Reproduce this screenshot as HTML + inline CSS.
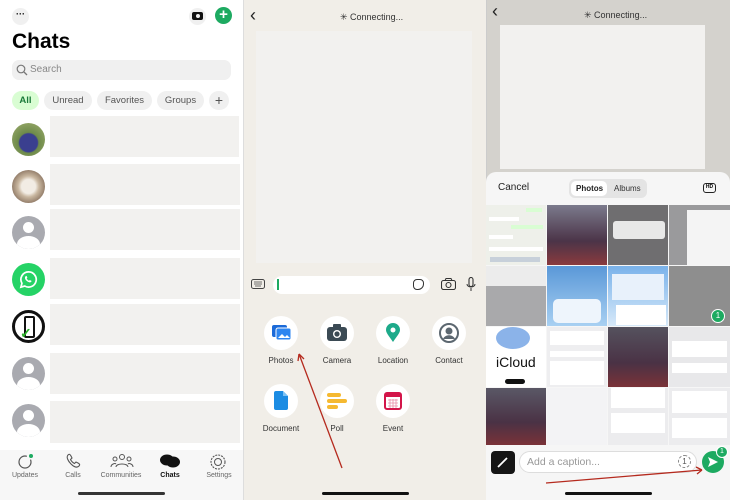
<!DOCTYPE html>
<html><head><meta charset="utf-8"><style>
*{margin:0;padding:0;box-sizing:border-box}
body{width:730px;height:500px;overflow:hidden;position:relative;font-family:"Liberation Sans",sans-serif;background:#fff}
.a{position:absolute}
.t{position:absolute;white-space:nowrap}
.box{position:absolute;background:#f2f1ef}
.av{position:absolute;left:12px;width:33px;height:33px;border-radius:50%;background:#a9aab0;overflow:hidden}
.chip{position:absolute;top:91px;height:19px;border-radius:10px;background:#f0f0f0;font-size:9.5px;color:#555;text-align:center;line-height:19px}
.tab{position:absolute;top:472px;font-size:7px;color:#666;text-align:center;width:50px}
.ic{position:absolute;width:34px;height:34px;border-radius:50%;background:#fff}
.lb{position:absolute;font-size:8px;color:#333;text-align:center;width:60px}
.th{position:absolute;overflow:hidden}
</style></head><body>
<!-- Panel 1 -->
<div class="a" style="left:0;top:0;width:244px;height:500px;background:#fff;border-right:1px solid #ddd"></div>
<div class="a" style="left:12px;top:8px;width:17px;height:17px;border-radius:50%;background:#f0f0f0;font-size:9px;text-align:center;line-height:13px;font-weight:bold">···</div>
<div class="a" style="left:189px;top:8px;width:17px;height:17px;border-radius:50%;background:#f0f0f0"></div>
<div class="a" style="left:192px;top:12px;width:11px;height:8px;border-radius:2px;background:#111"></div>
<div class="a" style="left:195.5px;top:14px;width:4px;height:4px;border-radius:50%;background:#f0f0f0"></div>
<div class="a" style="left:215px;top:7px;width:17px;height:17px;border-radius:50%;background:#1daa61;color:#fff;font-size:15px;text-align:center;line-height:16px;font-weight:bold">+</div>
<div class="t" style="left:12px;top:30px;font-size:21px;font-weight:bold;color:#000">Chats</div>
<div class="a" style="left:12px;top:60px;width:219px;height:20px;border-radius:7px;background:#f0f0f0"></div>
<svg class="a" style="left:16px;top:64px" width="12" height="12"><circle cx="5" cy="5" r="3.8" fill="none" stroke="#777" stroke-width="1.2"/><path d="M8 8L11 11" stroke="#777" stroke-width="1.3"/></svg>
<div class="t" style="left:30px;top:64px;font-size:10px;color:#888">Search</div>
<div class="chip" style="left:12px;width:27px;background:#d9fdd3;color:#1b7a3a;font-weight:bold">All</div>
<div class="chip" style="left:44px;width:48px">Unread</div>
<div class="chip" style="left:97px;width:55px">Favorites</div>
<div class="chip" style="left:157px;width:47px">Groups</div>
<div class="chip" style="left:209px;width:20px;font-size:14px;line-height:18px">+</div>
<div class="box" style="left:50px;top:116px;width:189px;height:41px"></div>
<div class="box" style="left:50px;top:164px;width:190px;height:41px"></div>
<div class="box" style="left:50px;top:209px;width:190px;height:41px"></div>
<div class="box" style="left:50px;top:258px;width:190px;height:41px"></div>
<div class="box" style="left:50px;top:304px;width:190px;height:41px"></div>
<div class="box" style="left:50px;top:353px;width:190px;height:41px"></div>
<div class="box" style="left:50px;top:401px;width:190px;height:42px"></div>
<div class="av" style="top:123px;background:radial-gradient(circle at 50% 60%,#3a3f8f 0 35%,#6d8a4a 40%,#a3b070)"></div>
<div class="av" style="top:170px;background:radial-gradient(circle at 50% 50%,#f2ece4 0 30%,#c9b7a0 45%,#5a4030)"></div>
<div class="av" style="top:216px"><div class="a" style="left:11px;top:6px;width:11px;height:11px;border-radius:50%;background:#fff"></div><div class="a" style="left:5px;top:20px;width:23px;height:16px;border-radius:50% 50% 0 0;background:#fff"></div></div>
<div class="av" style="top:263px;background:#25d366"><svg class="a" style="left:7px;top:7px" width="19" height="19" viewBox="0 0 20 20"><path d="M10 2a8 8 0 0 0-6.9 12L2 18l4.1-1.1A8 8 0 1 0 10 2z" fill="none" stroke="#fff" stroke-width="1.8"/><path d="M7 6.5c.5-.5 1-.3 1.3.4l.5 1.2-.7.9c.5 1 1.3 1.8 2.3 2.3l.9-.7 1.2.5c.7.3.9.8.4 1.3-1 1-2.6.8-4.300-.5S6 9 6.300 7.6z" fill="#fff"/></svg></div>
<div class="av" style="top:310px;background:#fff;border:3px solid #111"><div class="a" style="left:9px;top:3px;width:11px;height:22px;border:2px solid #111;border-radius:2px"></div><div class="a" style="left:5px;top:12px;font-size:14px;color:#2bb02b;font-weight:bold">✓</div></div>
<div class="av" style="top:357px"><div class="a" style="left:11px;top:6px;width:11px;height:11px;border-radius:50%;background:#fff"></div><div class="a" style="left:5px;top:20px;width:23px;height:16px;border-radius:50% 50% 0 0;background:#fff"></div></div>
<div class="av" style="top:404px"><div class="a" style="left:11px;top:6px;width:11px;height:11px;border-radius:50%;background:#fff"></div><div class="a" style="left:5px;top:20px;width:23px;height:16px;border-radius:50% 50% 0 0;background:#fff"></div></div>
<div class="a" style="left:0;top:450px;width:243px;height:50px;background:#f7f7f7"></div>
<svg class="a" style="left:16px;top:453px" width="18" height="18"><circle cx="9" cy="9" r="6" fill="none" stroke="#555" stroke-width="1.2" stroke-dasharray="30 5"/><circle cx="15" cy="3" r="2" fill="#1daa61"/></svg>
<svg class="a" style="left:65px;top:453px" width="16" height="16"><path d="M3 2c1-1 2-1 3 1l1 2-1.5 1.5c1 2 2 3 4 4L11 9l2 1c2 1 2 2 1 3-2 2-5 1-8-2S1 4 3 2z" fill="none" stroke="#555" stroke-width="1.1"/></svg>
<svg class="a" style="left:110px;top:453px" width="24" height="16"><circle cx="12" cy="4" r="2.5" fill="none" stroke="#555"/><circle cx="5" cy="6" r="2" fill="none" stroke="#555"/><circle cx="19" cy="6" r="2" fill="none" stroke="#555"/><path d="M6 14c0-4 12-4 12 0M1 14c0-3 4-4 5-3M23 14c0-3-4-4-5-3" fill="none" stroke="#555"/></svg>
<svg class="a" style="left:159px;top:454px" width="22" height="14"><ellipse cx="8" cy="6" rx="7" ry="5.5" fill="#111"/><ellipse cx="14" cy="8" rx="7" ry="5.5" fill="#111"/></svg>
<svg class="a" style="left:209px;top:453px" width="18" height="18"><circle cx="9" cy="9" r="7" fill="none" stroke="#555" stroke-width="1.1" stroke-dasharray="2 1"/><circle cx="9" cy="9" r="3.5" fill="none" stroke="#555"/></svg>
<div class="tab" style="left:0">Updates</div>
<div class="tab" style="left:48px">Calls</div>
<div class="tab" style="left:96px;width:50px">Communities</div>
<div class="tab" style="left:145px;color:#111;font-weight:bold">Chats</div>
<div class="tab" style="left:194px">Settings</div>
<div class="a" style="left:78px;top:492px;width:87px;height:3px;border-radius:2px;background:#333"></div>

<!-- Panel 2 -->
<div class="a" style="left:244px;top:0;width:242px;height:500px;background:#f1eee8"></div>
<div class="t" style="left:250px;top:5px;font-size:18px;color:#222">‹</div>
<div class="t" style="left:340px;top:12px;font-size:9px;color:#333">✳ Connecting...</div>
<div class="box" style="left:256px;top:31px;width:216px;height:232px;background:#f2f1ef"></div>
<svg class="a" style="left:251px;top:279px" width="14" height="10"><rect x="0.5" y="0.5" width="13" height="9" rx="2" fill="none" stroke="#444"/><path d="M3 3h8M3 5h8M4 7h6" stroke="#444" stroke-width="0.8"/></svg>
<div class="a" style="left:273px;top:276px;width:157px;height:18px;border-radius:9px;background:#fff"></div>
<div class="a" style="left:277px;top:279px;width:1.5px;height:11px;background:#1daa61"></div>
<div class="a" style="left:413px;top:279px;width:11px;height:11px;border:1.3px solid #333;border-radius:4px 4px 6px 4px"></div>
<svg class="a" style="left:441px;top:278px" width="15" height="12"><rect x="0.5" y="2.5" width="14" height="9" rx="2" fill="none" stroke="#333" stroke-width="1.1"/><path d="M4 2.5l1-2h5l1 2" fill="none" stroke="#333"/><circle cx="7.5" cy="7" r="2.5" fill="none" stroke="#333" stroke-width="1.1"/></svg>
<svg class="a" style="left:466px;top:277px" width="10" height="15"><rect x="3" y="0.5" width="4" height="9" rx="2" fill="none" stroke="#333" stroke-width="1.1"/><path d="M1 7c0 4 8 4 8 0M5 11v3" fill="none" stroke="#333"/></svg>
<div class="ic" style="left:264px;top:316px"></div>
<svg class="a" style="left:271px;top:324px" width="21" height="18"><rect x="1" y="1" width="15" height="12" rx="2" fill="#1b6ad8"/><rect x="5" y="4" width="15" height="12" rx="2" fill="#2e86f0" stroke="#fff"/><path d="M7 14l4-4 3 3 2-2 3 3z" fill="#fff"/></svg>
<div class="ic" style="left:320px;top:316px"></div>
<svg class="a" style="left:327px;top:324px" width="20" height="17"><rect x="0" y="3" width="20" height="14" rx="3" fill="#3b4a54"/><rect x="6" y="0" width="8" height="4" rx="1" fill="#3b4a54"/><circle cx="10" cy="10" r="4" fill="#fff"/><circle cx="10" cy="10" r="2.6" fill="#3b4a54"/></svg>
<div class="ic" style="left:376px;top:316px"></div>
<svg class="a" style="left:386px;top:323px" width="14" height="19"><path d="M7 19C3 13 0 10 0 7a7 7 0 0 1 14 0c0 3-3 6-7 12z" fill="#1daa8a"/><circle cx="7" cy="7" r="2.5" fill="#fff"/></svg>
<div class="ic" style="left:432px;top:316px"></div>
<svg class="a" style="left:439px;top:323px" width="20" height="20"><circle cx="10" cy="10" r="9" fill="none" stroke="#5c6770" stroke-width="2"/><circle cx="10" cy="8" r="3.5" fill="#5c6770"/><path d="M4 16c2-5 10-5 12 0" fill="#5c6770"/></svg>
<div class="lb" style="left:251px;top:356px">Photos</div>
<div class="lb" style="left:307px;top:356px">Camera</div>
<div class="lb" style="left:363px;top:356px">Location</div>
<div class="lb" style="left:419px;top:356px">Contact</div>
<div class="ic" style="left:264px;top:384px"></div>
<svg class="a" style="left:274px;top:391px" width="14" height="19"><path d="M0 2a2 2 0 0 1 2-2h7l5 5v12a2 2 0 0 1-2 2H2a2 2 0 0 1-2-2z" fill="#1c8ce3"/><path d="M9 0v5h5" fill="#7cc2f5"/></svg>
<div class="ic" style="left:320px;top:384px"></div>
<svg class="a" style="left:327px;top:393px" width="20" height="16"><rect x="0" y="0" width="14" height="4" rx="2" fill="#f5b931"/><rect x="0" y="6" width="20" height="4" rx="2" fill="#f5b931"/><rect x="0" y="12" width="11" height="4" rx="2" fill="#f5b931"/></svg>
<div class="ic" style="left:376px;top:384px"></div>
<svg class="a" style="left:384px;top:392px" width="18" height="18"><rect x="1" y="1" width="16" height="16" rx="2" fill="#fff" stroke="#d3154a" stroke-width="2"/><rect x="1" y="1" width="16" height="4" fill="#d3154a"/><path d="M4 8h10M4 11h10M4 14h10M6 7v9M9 7v9M12 7v9" stroke="#e98ba6" stroke-width="0.8"/></svg>
<div class="lb" style="left:251px;top:424px">Document</div>
<div class="lb" style="left:307px;top:424px">Poll</div>
<div class="lb" style="left:363px;top:424px">Event</div>
<svg class="a" style="left:244px;top:0" width="242" height="500"><path d="M98 468L55 354" stroke="#b52a1e" stroke-width="1.3"/><path d="M55 354l-1 7M55 354l5 5" stroke="#b52a1e" stroke-width="1.3" fill="none"/></svg>
<div class="a" style="left:322px;top:492px;width:87px;height:3px;border-radius:2px;background:#111"></div>

<!-- Panel 3 -->
<div class="a" style="left:486px;top:0;width:244px;height:500px;background:#d4d2cd;border-left:1px solid #ccc"></div>
<div class="t" style="left:492px;top:1px;font-size:18px;color:#222">‹</div>
<div class="t" style="left:584px;top:10px;font-size:9px;color:#333">✳ Connecting...</div>
<div class="a" style="left:500px;top:25px;width:205px;height:144px;background:#f2f1ef"></div>
<div class="a" style="left:486px;top:172px;width:244px;height:328px;background:#f6f6f6;border-radius:10px 10px 0 0"></div>
<div class="t" style="left:498px;top:182px;font-size:10px;color:#222">Cancel</div>
<div class="a" style="left:569px;top:179px;width:78px;height:19px;border-radius:6px;background:#e4e4e4"></div>
<div class="a" style="left:571px;top:181px;width:36px;height:15px;border-radius:5px;background:#fff"></div>
<div class="t" style="left:576px;top:184px;font-size:8px;font-weight:bold;color:#222">Photos</div>
<div class="t" style="left:614px;top:184px;font-size:8px;color:#333">Albums</div>
<div class="a" style="left:703px;top:183px;width:13px;height:10px;border:1.3px solid #222;border-radius:3px;font-size:5px;font-weight:bold;text-align:center;line-height:7px">HD</div>
<!-- grid -->
<div class="th" style="left:486px;top:205px;width:60px;height:60px;background:#eef0ea"><div class="a" style="left:40px;top:3px;width:16px;height:4px;background:#d9fdd3"></div><div class="a" style="left:3px;top:12px;width:30px;height:4px;background:#fff"></div><div class="a" style="left:25px;top:20px;width:32px;height:4px;background:#d9fdd3"></div><div class="a" style="left:3px;top:30px;width:24px;height:4px;background:#fff"></div><div class="a" style="left:3px;top:42px;width:54px;height:4px;background:#fff"></div><div class="a" style="left:4px;top:52px;width:50px;height:5px;background:#c7d0da"></div></div>
<div class="th" style="left:547px;top:205px;width:60px;height:60px;background:linear-gradient(#7b7a8c,#4b3448 60%,#8a3a3e)"></div>
<div class="th" style="left:608px;top:205px;width:60px;height:60px;background:#6f6e70"><div class="a" style="left:5px;top:16px;width:52px;height:18px;background:#e8e8e8;border-radius:3px"></div></div>
<div class="th" style="left:669px;top:205px;width:61px;height:60px;background:#9a9a9c"><div class="a" style="left:18px;top:5px;width:43px;height:55px;background:#f4f4f4"></div></div>
<div class="th" style="left:486px;top:266px;width:60px;height:60px;background:#a9a9ab"><div class="a" style="left:0;top:0;width:60px;height:20px;background:#ececec"></div></div>
<div class="th" style="left:547px;top:266px;width:60px;height:60px;background:linear-gradient(#5a98d8,#a8d0f2)"><div class="a" style="left:6px;top:33px;width:48px;height:24px;background:#eef5fc;border-radius:5px"></div></div>
<div class="th" style="left:608px;top:266px;width:60px;height:60px;background:linear-gradient(#79b2ea,#d7e9f9)"><div class="a" style="left:4px;top:8px;width:52px;height:26px;background:#e8f1fb"></div><div class="a" style="left:8px;top:39px;width:50px;height:20px;background:#fff"></div></div>
<div class="th" style="left:669px;top:266px;width:61px;height:60px;background:#8e8e8e"><div class="a" style="left:42px;top:43px;width:14px;height:14px;border-radius:50%;background:#1daa61;border:1.5px solid #fff;color:#fff;font-size:8px;text-align:center;line-height:11px">1</div></div>
<div class="th" style="left:486px;top:327px;width:60px;height:60px;background:#fff"><div class="a" style="left:10px;top:0;width:34px;height:22px;border-radius:50%;background:#8bb3e9"></div><div class="t" style="left:10px;top:27px;font-size:14px;color:#111">iCloud</div><div class="a" style="left:19px;top:52px;width:20px;height:5px;border-radius:3px;background:#111"></div></div>
<div class="th" style="left:547px;top:327px;width:60px;height:60px;background:#eeeef0"><div class="a" style="left:3px;top:4px;width:54px;height:14px;background:#fff"></div><div class="a" style="left:3px;top:24px;width:54px;height:6px;background:#fff"></div><div class="a" style="left:3px;top:34px;width:54px;height:24px;background:#fff"></div></div>
<div class="th" style="left:608px;top:327px;width:60px;height:60px;background:linear-gradient(#55525e,#4a3245 60%,#7a3238)"></div>
<div class="th" style="left:669px;top:327px;width:61px;height:60px;background:#e8e8ea"><div class="a" style="left:3px;top:14px;width:55px;height:16px;background:#fff"></div><div class="a" style="left:3px;top:36px;width:55px;height:10px;background:#fff"></div></div>
<div class="th" style="left:486px;top:388px;width:60px;height:57px;background:linear-gradient(#5a5866,#4a3245 60%,#7a3238)"></div>
<div class="th" style="left:547px;top:388px;width:60px;height:57px;background:#f3f3f5"></div>
<div class="th" style="left:608px;top:388px;width:60px;height:57px;background:#ececee"><div class="a" style="left:3px;top:0;width:54px;height:20px;background:#fff"></div><div class="a" style="left:3px;top:25px;width:54px;height:20px;background:#fff"></div></div>
<div class="th" style="left:669px;top:388px;width:61px;height:57px;background:#ececee"><div class="a" style="left:3px;top:3px;width:55px;height:22px;background:#fff"></div><div class="a" style="left:3px;top:30px;width:55px;height:20px;background:#fff"></div></div>
<div class="a" style="left:491px;top:451px;width:24px;height:23px;border-radius:4px;background:#151515"></div>
<svg class="a" style="left:496px;top:455px" width="14" height="14"><path d="M2 12L11 3" stroke="#fff" stroke-width="1.8"/></svg>
<div class="a" style="left:519px;top:451px;width:178px;height:22px;border-radius:11px;background:#fff;border:1px solid #ddd"></div>
<div class="t" style="left:527px;top:456px;font-size:10.5px;color:#999">Add a caption...</div>
<div class="a" style="left:678px;top:455px;width:13px;height:13px;border-radius:50%;border:1px dashed #888;font-size:8px;text-align:center;line-height:11px;color:#555">1</div>
<div class="a" style="left:702px;top:451px;width:22px;height:22px;border-radius:50%;background:#1daa61"></div>
<svg class="a" style="left:707px;top:456px" width="12" height="12"><path d="M1 1l10 5-10 5 2-5z" fill="#fff"/></svg>
<div class="a" style="left:716px;top:446px;width:12px;height:12px;border-radius:50%;background:#1daa61;border:1px solid #fff;color:#fff;font-size:7px;text-align:center;line-height:10px">1</div>
<svg class="a" style="left:486px;top:460px" width="244" height="30"><path d="M60 23L216 10" stroke="#b52a1e" stroke-width="1.3"/><path d="M216 10l-6-3M216 10l-5 4" stroke="#b52a1e" stroke-width="1.3" fill="none"/></svg>
<div class="a" style="left:565px;top:492px;width:87px;height:3px;border-radius:2px;background:#111"></div>
</body></html>
